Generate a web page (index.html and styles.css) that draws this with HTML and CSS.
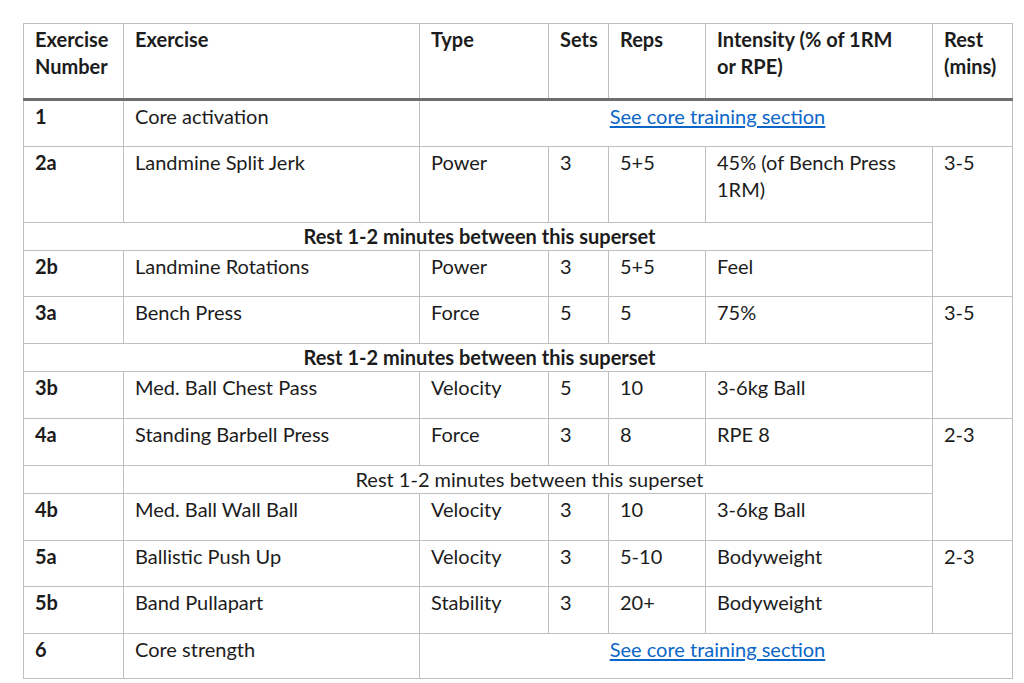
FILE: index.html
```html
<!DOCTYPE html>
<html>
<head>
<meta charset="utf-8">
<link rel="stylesheet" href="styles.css">
</head>
<body>
<div class="page">
<table class="plan">
  <colgroup>
    <col class="c-num"><col class="c-ex"><col class="c-type"><col class="c-sets"><col class="c-reps"><col class="c-int"><col class="c-rest">
  </colgroup>
  <thead>
    <tr class="head">
      <th>Exercise Number</th>
      <th>Exercise</th>
      <th>Type</th>
      <th>Sets</th>
      <th>Reps</th>
      <th class="int-head">Intensity (% of 1RM or RPE)</th>
      <th>Rest (mins)</th>
    </tr>
  </thead>
  <tbody>
    <tr class="r">
      <td class="num">1</td>
      <td>Core activation</td>
      <td colspan="5" class="link-cell"><a href="#">See core training section</a></td>
    </tr>
    <tr class="r2">
      <td class="num">2a</td>
      <td>Landmine Split Jerk</td>
      <td>Power</td>
      <td>3</td>
      <td>5+5</td>
      <td>45% (of Bench Press 1RM)</td>
      <td rowspan="3">3-5</td>
    </tr>
    <tr class="rest">
      <td colspan="6" class="rest-bold">Rest 1-2 minutes between this superset</td>
    </tr>
    <tr class="rs">
      <td class="num">2b</td>
      <td>Landmine Rotations</td>
      <td>Power</td>
      <td>3</td>
      <td>5+5</td>
      <td>Feel</td>
    </tr>
    <tr class="r">
      <td class="num">3a</td>
      <td>Bench Press</td>
      <td>Force</td>
      <td>5</td>
      <td>5</td>
      <td>75%</td>
      <td rowspan="3">3-5</td>
    </tr>
    <tr class="rest">
      <td colspan="6" class="rest-bold">Rest 1-2 minutes between this superset</td>
    </tr>
    <tr class="r">
      <td class="num">3b</td>
      <td>Med. Ball Chest Pass</td>
      <td>Velocity</td>
      <td>5</td>
      <td>10</td>
      <td>3-6kg Ball</td>
    </tr>
    <tr class="r">
      <td class="num">4a</td>
      <td>Standing Barbell Press</td>
      <td>Force</td>
      <td>3</td>
      <td>8</td>
      <td>RPE 8</td>
      <td rowspan="3">2-3</td>
    </tr>
    <tr class="rest">
      <td></td>
      <td colspan="5" class="rest-plain">Rest 1-2 minutes between this superset</td>
    </tr>
    <tr class="r">
      <td class="num">4b</td>
      <td>Med. Ball Wall Ball</td>
      <td>Velocity</td>
      <td>3</td>
      <td>10</td>
      <td>3-6kg Ball</td>
    </tr>
    <tr class="rs">
      <td class="num">5a</td>
      <td>Ballistic Push Up</td>
      <td>Velocity</td>
      <td>3</td>
      <td>5-10</td>
      <td>Bodyweight</td>
      <td rowspan="2">2-3</td>
    </tr>
    <tr class="r">
      <td class="num">5b</td>
      <td>Band Pullapart</td>
      <td>Stability</td>
      <td>3</td>
      <td>20+</td>
      <td>Bodyweight</td>
    </tr>
    <tr class="rl">
      <td class="num">6</td>
      <td>Core strength</td>
      <td colspan="5" class="link-cell"><a href="#">See core training section</a></td>
    </tr>
  </tbody>
</table>
</div>
</body>
</html>
```

FILE: styles.css
```css
html, body {
  margin: 0;
  padding: 0;
  background: #ffffff;
}

.page {
  padding: 23px 0 0 23px;
}

.plan {
  border-collapse: collapse;
  width: 989px;
  table-layout: fixed;
  font-family: Lato, "Liberation Sans", sans-serif;
  font-size: 20px;
  line-height: 27px;
  color: #1c1c1c;
}

.c-num { width: 100px; }
.c-ex { width: 296px; }
.c-type { width: 129px; }
.c-sets { width: 60px; }
.c-reps { width: 97px; }
.c-int { width: 227px; }
.c-rest { width: 80px; }

.plan th,
.plan td {
  border: 1px solid #bfbfbf;
  padding: 2px 8px 0 11px;
  vertical-align: top;
  text-align: left;
}

.plan th {
  font-weight: 700;
}

.plan th.int-head {
  padding-right: 24px;
}

.head {
  height: 76px;
}

.head th {
  border-bottom: 3px solid #6e6e6e;
}

.r { height: 47px; }
.rs { height: 46px; }
.rl { height: 45px; }
.r2 { height: 76px; }
.rest { height: 27px; }

.plan td.num {
  font-weight: 700;
}

.plan .rest td {
  padding-top: 0;
  padding-bottom: 0;
}

.plan td.rest-bold {
  font-weight: 700;
  text-align: center;
}

.plan td.rest-plain {
  text-align: center;
}

.plan td.link-cell {
  text-align: center;
}

.link-cell a {
  color: #0b66c8;
  text-decoration: underline;
  text-underline-offset: 2px;
}
```
